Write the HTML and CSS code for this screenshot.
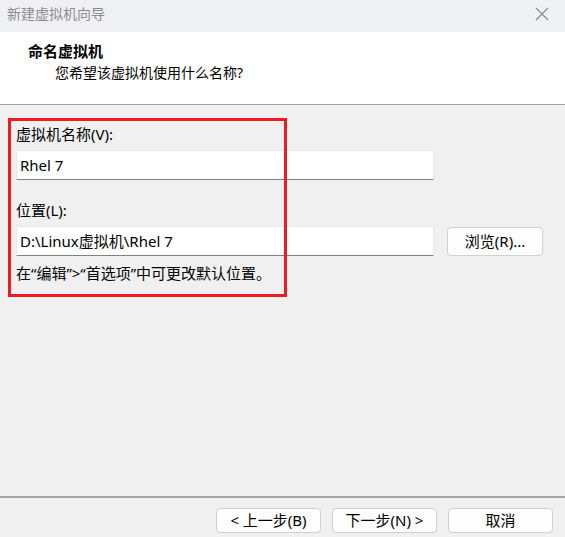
FILE: index.html
```html
<!DOCTYPE html>
<html lang="zh-CN">
<head>
<meta charset="utf-8">
<title>新建虚拟机向导</title>
<link rel="stylesheet" href="styles.css">
</head>
<body>
<div class="window">
  <div class="titlebar">
    <span class="title">新建虚拟机向导</span>
    <svg class="close" width="14" height="14" viewBox="0 0 14 14"><path d="M1 1L13 13M13 1L1 13" stroke="#8a8a8a" stroke-width="1.2" fill="none"/></svg>
  </div>
  <div class="header">
    <div class="h-title">命名虚拟机</div>
    <div class="h-sub">您希望该虚拟机使用什么名称?</div>
  </div>
  <div class="main">
    <div class="form">
      <div class="label">虚拟机名称(V):</div>
      <div class="row"><div class="input">Rhel 7</div></div>
      <div class="label second">位置(L):</div>
      <div class="row">
        <div class="input">D:\Linux虚拟机\Rhel 7</div>
        <button class="btn browse">浏览(R)...</button>
      </div>
      <div class="hint">在“编辑”&gt;“首选项”中可更改默认位置。</div>
    </div>
    <div class="highlight"></div>
  </div>
  <div class="footer">
    <button class="btn nav">&lt; 上一步(B)</button>
    <button class="btn nav">下一步(N) &gt;</button>
    <button class="btn nav cancel">取消</button>
  </div>
</div>
</body>
</html>
```
FILE: styles.css
```css
* { box-sizing: border-box; }
html, body { margin: 0; padding: 0; }
body {
  width: 565px;
  height: 537px;
  background: #f0f0f0;
  font-family: "Noto Sans", "Noto Sans CJK SC", sans-serif;
  color: #000;
  overflow: hidden;
}
.window {
  display: flex;
  flex-direction: column;
  height: 537px;
}
.titlebar {
  height: 32px;
  background: #eef0f4;
  display: flex;
  align-items: center;
  justify-content: space-between;
  padding: 0 16px 0 7px;
}
.title {
  font-size: 14px;
  color: #8c8c8c;
  line-height: 20px;
  margin-top: -4px;
}
.close { margin-top: -4px; }
.header {
  height: 73px;
  background: #fff;
  border-bottom: 1px solid #a0a0a0;
  padding: 8px 0 0 28px;
}
.h-title {
  font-size: 15px;
  font-weight: bold;
  line-height: 22px;
}
.h-sub {
  font-size: 14px;
  line-height: 22px;
  padding-left: 27px;
}
.main {
  position: relative;
  flex: 1;
  border-bottom: 2px solid #a4a4a4;
}
.form {
  padding: 19px 0 0 16px;
  display: flex;
  flex-direction: column;
}
.label {
  font-size: 15px;
  line-height: 20px;
  height: 20px;
  margin-bottom: 6px;
}
.label.second { margin-top: 20px; }
.row {
  display: flex;
  align-items: center;
  gap: 13px;
}
.input {
  width: 418px;
  height: 30px;
  background: #fff;
  border: 1px solid #e8e8e8;
  border-bottom: 1px solid #808080;
  border-radius: 2px 2px 0 0;
  font-size: 15px;
  line-height: 28px;
  padding-left: 3px;
}
.btn {
  font-family: "Noto Sans", "Noto Sans CJK SC", sans-serif;
  font-size: 15px;
  color: #000;
  background: #fdfdfd;
  border: 1px solid #d0d0d0;
  border-radius: 4px;
  padding: 0;
  line-height: 23px;
}
.browse {
  width: 96px;
  height: 29px;
}
.hint {
  font-size: 15px;
  line-height: 20px;
  margin-top: 7px;
}
.highlight {
  position: absolute;
  left: 8px;
  top: 13px;
  width: 279px;
  height: 179px;
  border: 3px solid #ed1c24;
}
.footer {
  height: 39px;
  display: flex;
  justify-content: flex-end;
  align-items: flex-start;
  padding: 10px 12px 0 0;
  gap: 11px;
}
.nav {
  width: 105px;
  height: 25px;
}
```
